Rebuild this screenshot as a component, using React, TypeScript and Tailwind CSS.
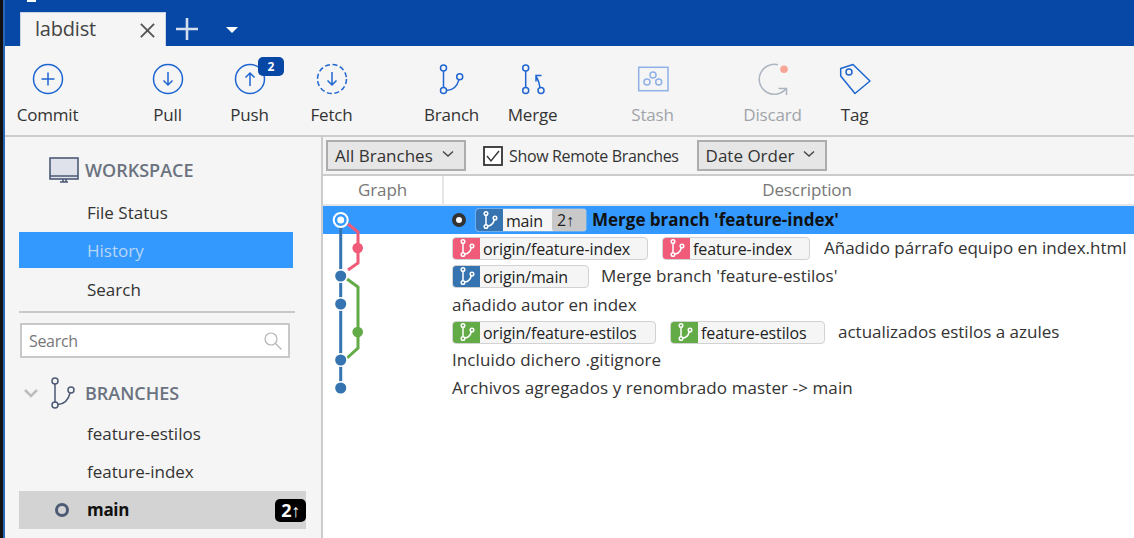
import React from "react";

const font = { fontFamily: '"Open Sans", "Noto Sans", sans-serif' };

function ToolIcon({ name }: { name: string }) {
  const c = "#1f66d1";
  const common = { width: 36, height: 36, viewBox: "0 0 36 36", fill: "none", stroke: c, strokeWidth: 1.5 } as const;
  switch (name) {
    case "commit":
      return (
        <svg {...common}>
          <circle cx="18" cy="18" r="14.5" />
          <path d="M18 11.5v13M11.5 18h13" />
        </svg>
      );
    case "pull":
      return (
        <svg {...common}>
          <circle cx="18" cy="18" r="14.5" />
          <path d="M18 11v13M13.5 19.5l4.5 4.5 4.5-4.5" />
        </svg>
      );
    case "push":
      return (
        <svg {...common}>
          <circle cx="18" cy="18" r="14.5" />
          <path d="M18 25V12M13.5 16.5l4.5-4.5 4.5 4.5" />
        </svg>
      );
    case "fetch":
      return (
        <svg {...common}>
          <circle cx="18" cy="18" r="14.5" strokeDasharray="5 2.6" />
          <path d="M18 11v13M13.5 19.5l4.5 4.5 4.5-4.5" />
        </svg>
      );
    case "branch":
      return (
        <svg {...common}>
          <circle cx="9.5" cy="7" r="3" />
          <circle cx="9.500" cy="29.500" r="3" />
          <circle cx="25.700" cy="15.700" r="3" />
          <path d="M9.500 10v16.500M12.500 29.500c6.500-.3 10.800-4.500 12.400-10.900" />
        </svg>
      );
    case "merge":
      return (
        <svg {...common}>
          <circle cx="10.700" cy="7" r="3" />
          <circle cx="10.700" cy="29.500" r="3" />
          <circle cx="26" cy="29.500" r="3" />
          <path d="M10.700 10v16.500M25 26.500c-.5-4-1.800-7.800-4-11.500M21 20.500v-6h5.500" />
        </svg>
      );
    case "stash":
      return (
        <svg {...common} stroke="#8fb1e6">
          <rect x="3.700" y="6.300" width="29.300" height="23.400" />
          <circle cx="18" cy="14" r="3" />
          <circle cx="12" cy="21" r="3" />
          <circle cx="23.700" cy="21" r="3" />
        </svg>
      );
    case "discard":
      return (
        <svg {...common} stroke="#adb5c0">
          <path d="M23 3.800A15 15 0 1 0 31.500 27M23.500 27.500h8v6.500" />
          <circle cx="29" cy="8.300" r="3.800" fill="#f9a595" stroke="none" />
        </svg>
      );
    default:
      return (
        <svg {...common}>
          <path d="M3.700 7.500L16 3.500 33 20 18 32.500 3.700 15z" strokeLinejoin="round" />
          <circle cx="12" cy="11" r="3" />
        </svg>
      );
  }
}

function Tool({ name, label, off, badge }: { name: string; label: string; off?: boolean; badge?: string }) {
  return (
    <div className="relative flex w-[81px] shrink-0 flex-col items-center">
      <div className="mt-[15px] flex h-[36px] items-center justify-center">
        <ToolIcon name={name} />
      </div>
      <div className={`mt-[6px] text-[17px] leading-[24px] tracking-[-0.2px] ${off ? "text-[#a0a4aa]" : "text-[#333]"}`}>{label}</div>
      {badge && (
        <span className="absolute left-[49px] top-[11px] flex h-[19px] w-[26px] items-center justify-center rounded-[5px] bg-[#0747a6] text-[12px] font-bold text-white">
          {badge}
        </span>
      )}
    </div>
  );
}

function BranchGlyph({ color = "#fff", size = 20 }: { color?: string; size?: number }) {
  return (
    <svg width={size} height={size} viewBox="0 0 20 20" fill="none" stroke={color} strokeWidth="1.500">
      <circle cx="6" cy="3.500" r="1.800" />
      <circle cx="6" cy="16.500" r="1.800" />
      <circle cx="15" cy="8" r="1.800" />
      <path d="M6 5.300v9.400M7.800 16c3.500-.5 5.700-3 6.500-6.300" />
    </svg>
  );
}

function Ref({ color, label, w }: { color: string; label: string; w: number }) {
  return (
    <span
      className="flex h-[23px] shrink-0 items-center overflow-hidden rounded-[4px] border border-[#d2d2d2] bg-[#f5f5f5]"
      style={{ width: w }}
    >
      <span className="flex h-[23px] w-[27px] shrink-0 items-center justify-center" style={{ backgroundColor: color }}>
        <BranchGlyph />
      </span>
      <span className="pl-[3px] pt-[1px] text-[16px] tracking-[-0.1px] text-[#222]">{label}</span>
    </span>
  );
}

function Select({ label, w }: { label: string; w: number }) {
  return (
    <div
      className="flex h-[31px] items-center justify-between border-2 border-[#adadad] bg-[#e6e6e6] pl-[7px] pr-[9px] text-[#333]"
      style={{ width: w }}
    >
      <span className="text-[17px]">{label}</span>
      <svg width="14" height="8" viewBox="0 0 14 8" fill="none" stroke="#444" strokeWidth="1.400" className="mb-[3px]">
        <path d="M2 1.500l5 4.500 5-4.500" />
      </svg>
    </div>
  );
}

function Row({ children, selected }: { children: React.ReactNode; selected?: boolean }) {
  return (
    <div className={`flex h-[28px] items-center whitespace-nowrap pl-[129px] text-[17px] text-[#333] ${selected ? "bg-[#3399ff]" : ""}`}>
      {children}
    </div>
  );
}

function Graph() {
  const blue = "#3573b1";
  const red = "#ef5b78";
  const green = "#63ab47";
  return (
    <svg className="absolute left-0 top-0" width="60" height="200" viewBox="0 0 60 200" fill="none">
      <path d="M17.700 14V182" stroke={blue} strokeWidth="3" />
      <path d="M25 18L35 26V57L25 64" stroke={red} strokeWidth="3" />
      <path d="M24 73L35 81V142L24 152" stroke={green} strokeWidth="3" />
      <circle cx="34.700" cy="42" r="5.300" fill={red} />
      <circle cx="34.700" cy="126" r="5.300" fill={green} />
      {[70, 98, 154, 182].map((y) => (
        <circle key={y} cx="17.700" cy={y} r="6.300" fill={blue} stroke="#fff" strokeWidth="1.500" />
      ))}
      <circle cx="17.700" cy="14" r="7" fill="#3399ff" stroke="#fff" strokeWidth="2" />
      <circle cx="17.700" cy="14" r="3.500" fill="#fff" />
    </svg>
  );
}

export default function App() {
  return (
    <div className="relative flex h-[538px] w-[1134px] overflow-hidden bg-white" style={font}>
      <div className="flex w-[5px] shrink-0">
        <div className="w-[3px] bg-[#111]" />
        <div className="w-[2px] bg-[#2a66b8]" />
      </div>
      <div className="flex min-w-0 flex-1 flex-col">
        {/* tabs */}
        <div className="relative flex h-[46px] shrink-0 items-end bg-[#0747a6] pl-[15px]">
          <span className="absolute left-[22px] top-0 h-[2px] w-[9px] bg-white" />
          <div className="flex h-[34px] w-[146px] items-center justify-between border-x border-t border-[#c9d4e6] bg-[#f5f5f5] pb-[2px] pl-[14px] pr-[9px]">
            <span className="text-[20px] tracking-[-0.2px] text-[#444]">labdist</span>
            <svg width="17" height="17" viewBox="0 0 18 18" stroke="#555" strokeWidth="2" className="mt-[3px]">
              <path d="M2 2l14 14M16 2L2 16" />
            </svg>
          </div>
          <svg className="mb-[6px] ml-[10px]" width="22" height="22" viewBox="0 0 22 22" stroke="#d5deee" strokeWidth="2.600">
            <path d="M11 0v22M0 11h22" />
          </svg>
          <svg className="mb-[13px] ml-[28px]" width="12" height="6" viewBox="0 0 12 6" fill="#fff">
            <path d="M0 0h12L6 6z" />
          </svg>
        </div>
        {/* toolbar */}
        <div className="flex h-[91px] shrink-0 border-b-2 border-[#cccccc] bg-[#f5f5f5] pl-[2px]">
          <Tool name="commit" label="Commit" />
          <div className="w-[39px]" />
          <Tool name="pull" label="Pull" />
          <div className="w-[1px]" />
          <Tool name="push" label="Push" badge="2" />
          <div className="w-[1px]" />
          <Tool name="fetch" label="Fetch" />
          <div className="w-[39px]" />
          <Tool name="branch" label="Branch" />
          <Tool name="merge" label="Merge" />
          <div className="w-[39px]" />
          <Tool name="stash" label="Stash" off />
          <div className="w-[39px]" />
          <Tool name="discard" label="Discard" off />
          <div className="w-[1px]" />
          <Tool name="tag" label="Tag" />
        </div>
        <div className="flex min-h-0 flex-1">
          {/* sidebar */}
          <div className="flex w-[318px] shrink-0 flex-col border-r-2 border-[#cccccc] bg-[#f5f5f5] pl-[14px]">
            <div className="flex h-[57px] items-center pl-[30px] pt-[9px]">
              <svg width="30" height="26" viewBox="0 0 30 26" className="mr-[6px]" fill="none">
                <rect x="1" y="1" width="28" height="21" fill="#dfe2ea" stroke="#4c5a75" strokeWidth="1.600" />
                <path d="M1 19h28M11 25h8M14 22v3M17 22v3" stroke="#4c5a75" strokeWidth="1.600" />
              </svg>
              <span className="text-[18px] font-semibold text-[#6b7280]">WORKSPACE</span>
            </div>
            <div className="flex h-[38px] w-[274px] items-center pl-[68px] text-[17px] text-[#333]">File Status</div>
            <div className="flex h-[36px] w-[274px] items-center bg-[#3399ff] pl-[68px] pt-[1px] text-[17px] text-[#b9d6f5]">History</div>
            <div className="flex h-[43px] w-[274px] items-center pl-[68px] text-[17px] text-[#333]">Search</div>
            <div className="h-[2px] w-[276px] bg-[#c9c9c9]" />
            <div className="ml-[1px] mt-[10px] flex h-[35px] w-[270px] items-center justify-between border-2 border-[#c8c8c8] bg-white pl-[7px] pr-[6px]">
              <span className="pt-[1px] text-[16px] tracking-[-0.32px] text-[#777]">Search</span>
              <svg width="18" height="18" viewBox="0 0 18 18" fill="none" stroke="#b5b5b5" strokeWidth="1.200">
                <circle cx="7" cy="7" r="6" />
                <path d="M11.500 11.500l6 6" />
              </svg>
            </div>
            <div className="flex h-[57px] items-center pl-[5px] pt-[13px]">
              <svg width="14" height="9" viewBox="0 0 14 9" fill="none" stroke="#bdbdbd" strokeWidth="2.500">
                <path d="M1 1l6 6 6-6" />
              </svg>
              <div className="ml-[10px] mr-[9px]">
                <svg width="28" height="32" viewBox="0 0 28 32" fill="none" stroke="#4c5a75" strokeWidth="1.500">
                  <circle cx="7" cy="4" r="3" />
                  <circle cx="7" cy="28" r="3" />
                  <circle cx="23" cy="13" r="3" />
                  <path d="M7 7v18M10 27.500c6-.5 10.500-5 12-11.500" />
                </svg>
              </div>
              <span className="text-[18px] font-semibold text-[#6b7280]">BRANCHES</span>
            </div>
            <div className="flex h-[38px] items-center pl-[68px] text-[17px] text-[#333]">feature-estilos</div>
            <div className="flex h-[38px] items-center pl-[68px] text-[17px] text-[#333]">feature-index</div>
            <div className="flex h-[38px] w-[287px] items-center justify-between bg-[#d3d3d3]">
              <span className="flex items-center">
                <span className="ml-[36px] mr-[18px] h-[14px] w-[14px] rounded-full border-[3px] border-[#4c5a75]" />
                <span className="text-[17px] font-bold tracking-[-0.3px] text-[#111]">main</span>
              </span>
              <span className="flex h-[23px] w-[31px] items-center justify-center rounded-[5px] bg-black text-[18px] font-bold leading-none tracking-[-0.5px] text-white">
                2↑
              </span>
            </div>
          </div>
          {/* main */}
          <div className="flex min-w-0 flex-1 flex-col">
            <div className="flex h-[39px] shrink-0 items-center border-b-2 border-[#cccccc] bg-[#f5f5f5] pl-[3px]">
              <Select label="All Branches" w={140} />
              <div className="ml-[17px] mr-[18px] flex items-center">
                <svg width="20" height="20" viewBox="0 0 20 20" fill="none">
                  <rect x="1" y="1" width="18" height="18" fill="#fff" stroke="#333" strokeWidth="1.800" />
                  <path d="M4 10l4 5 8-10" stroke="#333" strokeWidth="1.400" />
                </svg>
                <span className="ml-[6px] text-[16px] tracking-[-0.35px] text-[#333]">Show Remote Branches</span>
              </div>
              <Select label="Date Order" w={130} />
            </div>
            <div className="flex h-[30px] shrink-0 border-b-2 border-[#e6e6e6] bg-white text-[17px] tracking-[-0.1px] text-[#777]">
              <div className="flex w-[121px] items-center justify-center border-r-2 border-[#e6e6e6]">Graph</div>
              <div className="flex flex-1 items-center justify-center pl-[36px]">Description</div>
            </div>
            <div className="relative flex-1">
              <Row selected>
                <span className="mr-[9px] h-[14px] w-[14px] rounded-full border-[4px] border-[#333] bg-white" />
                <span className="flex h-[24px] w-[112px] shrink-0 items-center overflow-hidden rounded-[4px] border border-[#6aaef0] bg-[#f5f5f5]">
                  <span className="flex h-[24px] w-[27px] shrink-0 items-center justify-center bg-[#3573b1]">
                    <BranchGlyph />
                  </span>
                  <span className="w-[49px] pl-[3px] pt-[1px] text-[16px] tracking-[-0.2px] text-[#222]">main</span>
                  <span className="flex h-[24px] flex-1 items-center rounded-[4px] bg-[#c8c8c8] pl-[5px] text-[16px] tracking-[-0.2px] text-[#222]">2↑</span>
                </span>
                <span className="ml-[5px] font-bold text-[#111]">Merge branch 'feature-index'</span>
              </Row>
              <Row>
                <Ref color="#ef5b78" label="origin/feature-index" w={196} />
                <span className="w-[14px]" />
                <Ref color="#ef5b78" label="feature-index" w={148} />
                <span className="ml-[14px]">Añadido párrafo equipo en index.html</span>
              </Row>
              <Row>
                <Ref color="#3573b1" label="origin/main" w={137} />
                <span className="ml-[12px]">Merge branch 'feature-estilos'</span>
              </Row>
              <Row><span className="pt-[1px]">añadido autor en index</span></Row>
              <Row>
                <Ref color="#63ab47" label="origin/feature-estilos" w={204} />
                <span className="w-[14px]" />
                <Ref color="#63ab47" label="feature-estilos" w={155} />
                <span className="ml-[13px]">actualizados estilos a azules</span>
              </Row>
              <Row><span className="tracking-[0.1px]">Incluido dichero .gitignore</span></Row>
              <Row><span className="tracking-[0.1px]">Archivos agregados y renombrado master -&gt; main</span></Row>
              <Graph />
            </div>
          </div>
        </div>
      </div>
    </div>
  );
}
